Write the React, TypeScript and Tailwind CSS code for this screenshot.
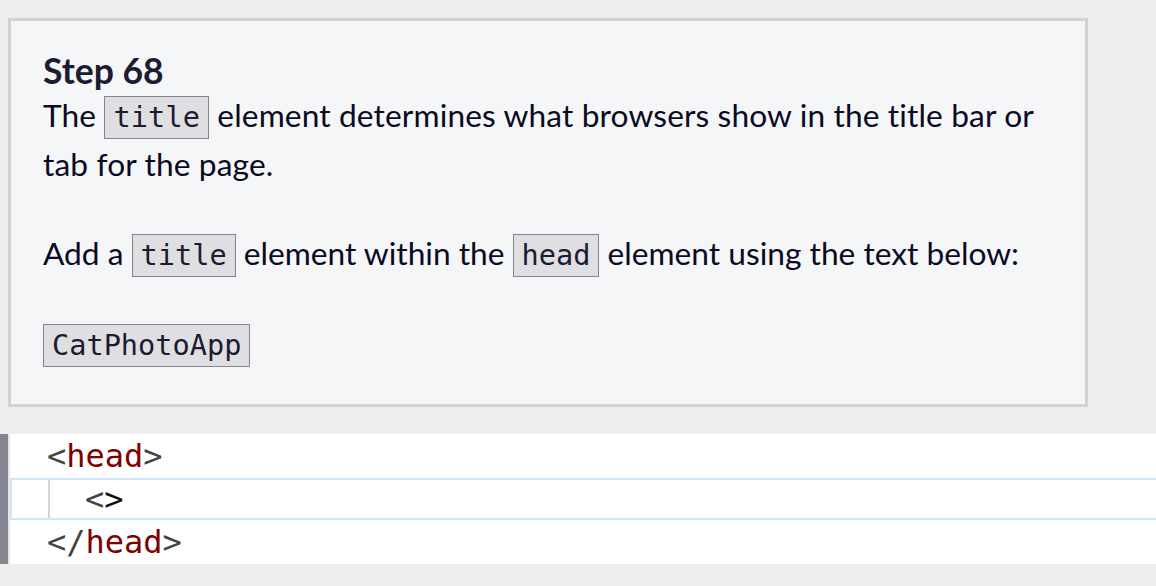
import React from "react";

const Code = ({ children }: { children: React.ReactNode }) => (
  <code className="inline-block border border-[#858591] bg-[#dfdfe2] px-[8px] py-[3px] align-baseline font-['DejaVu_Sans_Mono',monospace] text-[28.6px] leading-[35px] text-[#1b1b32]">
    {children}
  </code>
);

function CodeLine({
  children,
  active,
}: {
  children: React.ReactNode;
  active?: boolean;
}) {
  return (
    <div
      className={
        active
          ? "relative flex h-[42px] items-center border-y-2 border-l-2 border-[#cfe6f8] pl-[35px]"
          : "flex h-[44px] items-center pl-[37px]"
      }
    >
      {active && <span className="absolute left-[36px] top-0 h-full w-[2px] bg-[#d4d4d4]" />}
      {children}
    </div>
  );
}

export default function App() {
  return (
    <div className="min-h-[586px] bg-[#eeeeee] pt-[18px] font-['Lato',sans-serif] [font-variant-ligatures:none]">
      <div className="ml-[8px] w-[1080px] border-[3px] border-[#d0d0d5] bg-[#f5f6f7] px-[32px] pt-[30px] pb-[36px] text-[31.7px] leading-[49px] text-[#0a0a23]">
        <h1 className="text-[35.5px] font-bold leading-[40px] text-[#1b1b32]">Step 68</h1>
        <p className="tracking-[0.12px]">
          The <Code>title</Code> element determines what browsers show in the title bar or
          tab for the page.
        </p>
        <p className="mt-[40px]">
          Add a <Code>title</Code> element within the <Code>head</Code> element using the text below:
        </p>
        <p className="mt-[41px]">
          <Code>CatPhotoApp</Code>
        </p>
      </div>

      <div className="mt-[27px] flex bg-white font-['DejaVu_Sans_Mono',monospace] text-[32px]">
        <div className="w-[8px] shrink-0 bg-[#858591]" />
        <div className="w-[2px] shrink-0 bg-[#e4e4e4]" />
        <div className="flex-1">
          <CodeLine>
            <span className="text-[#444444]">&lt;</span>
            <span className="text-[#800000]">head</span>
            <span className="text-[#444444]">&gt;</span>
          </CodeLine>
          <CodeLine active>
            <span className="pl-[38px] text-[#444444]">&lt;</span>
            <span className="text-[#111111]">&gt;</span>
          </CodeLine>
          <CodeLine>
            <span className="text-[#444444]">&lt;/</span>
            <span className="text-[#800000]">head</span>
            <span className="text-[#444444]">&gt;</span>
          </CodeLine>
        </div>
      </div>
      <div className="h-[23px]" />
    </div>
  );
}
